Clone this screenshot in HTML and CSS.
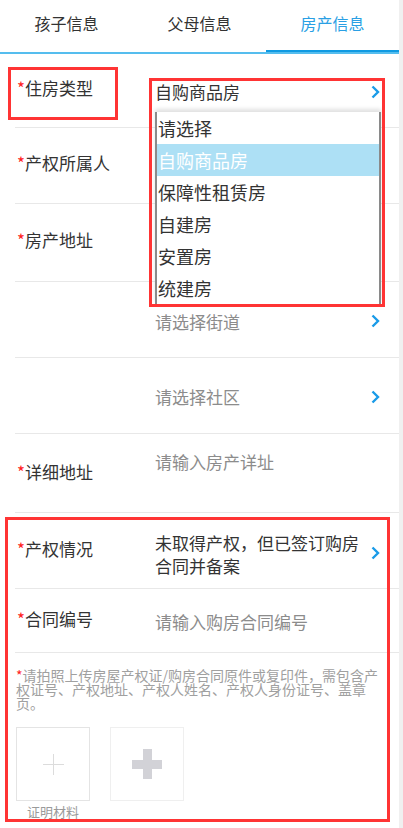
FILE: index.html
```html
<!DOCTYPE html>
<html lang="zh-CN">
<head>
<meta charset="utf-8">
<title>房产信息</title>
<link rel="stylesheet" href="styles.css">
</head>
<body>
<div class="page">
  <div class="tabs">
    <div class="tab">孩子信息</div>
    <div class="tab">父母信息</div>
    <div class="tab active">房产信息</div>
  </div>

  <div class="form">
    <div class="row r1">
      <div class="label"><span class="req">*</span>住房类型</div>
      <div class="value">自购商品房</div>
      <svg class="chev" width="9" height="14" viewBox="0 0 9 14"><polyline points="1.5,1.5 7,7 1.5,12.5" fill="none" stroke="#1a9be8" stroke-width="2.4"/></svg>
    </div>
    <div class="row r2">
      <div class="label"><span class="req">*</span>产权所属人</div>
      <div class="value"></div>
    </div>
    <div class="row r3">
      <div class="label"><span class="req">*</span>房产地址</div>
      <div class="value"></div>
    </div>
    <div class="row r4">
      <div class="label"></div>
      <div class="value ph">请选择街道</div>
      <svg class="chev" width="9" height="14" viewBox="0 0 9 14"><polyline points="1.5,1.5 7,7 1.5,12.5" fill="none" stroke="#1a9be8" stroke-width="2.4"/></svg>
    </div>
    <div class="row r5">
      <div class="label"></div>
      <div class="value ph">请选择社区</div>
      <svg class="chev" width="9" height="14" viewBox="0 0 9 14"><polyline points="1.5,1.5 7,7 1.5,12.5" fill="none" stroke="#1a9be8" stroke-width="2.4"/></svg>
    </div>
    <div class="row r6">
      <div class="label"><span class="req">*</span>详细地址</div>
      <div class="value ph">请输入房产详址</div>
    </div>
    <div class="row r7">
      <div class="label"><span class="req">*</span>产权情况</div>
      <div class="value multi">未取得产权，但已签订购房合同并备案</div>
      <svg class="chev" width="9" height="14" viewBox="0 0 9 14"><polyline points="1.5,1.5 7,7 1.5,12.5" fill="none" stroke="#1a9be8" stroke-width="2.4"/></svg>
    </div>
    <div class="row r8">
      <div class="label"><span class="req">*</span>合同编号</div>
      <div class="value ph">请输入购房合同编号</div>
    </div>

    <p class="note"><span class="req">*</span>请拍照上传房屋产权证/购房合同原件或复印件，需包含产权证号、产权地址、产权人姓名、产权人身份证号、盖章页。</p>

    <div class="uploads">
      <div class="upload">
        <div class="box thin"><span class="plus-thin"></span></div>
        <div class="cap">证明材料</div>
      </div>
      <div class="upload">
        <div class="box add"><span class="plus-bold"></span></div>
      </div>
    </div>
  </div>

  <ul class="dropdown">
    <li>请选择</li>
    <li class="sel">自购商品房</li>
    <li>保障性租赁房</li>
    <li>自建房</li>
    <li>安置房</li>
    <li>统建房</li>
  </ul>

  <div class="mark m1"></div>
  <div class="mark m2"></div>
  <div class="mark m3"></div>
</div>
</body>
</html>
```

FILE: styles.css
```css
* { box-sizing: border-box; }
html, body { margin: 0; padding: 0; }
body {
  background: #f0f0f0;
  font-family: "Noto Sans CJK SC", "Noto Sans", sans-serif;
  color: #333;
}
.page {
  position: relative;
  width: 399px;
  height: 828px;
  background: #fff;
  overflow: hidden;
}

/* tabs */
.tabs {
  display: flex;
  height: 54px;
  border-bottom: 2px solid #55bdee;
}
.tab {
  flex: 1;
  text-align: center;
  font-size: 16px;
  line-height: 24px;
  padding-top: 11px;
  color: #333;
}
.tab.active {
  color: #2a9fe4;
  box-shadow: inset 0 -2px 0 #109ae2;
}

/* form rows */
.form { margin-left: 15px; }
.row {
  display: flex;
  align-items: flex-start;
  border-bottom: 1px solid #e8e8e8;
}
.label {
  width: 140px;
  flex: none;
  padding-left: 2px;
  font-size: 17px;
  line-height: 24px;
  color: #333;
}
.req { color: #f22; }
.value {
  flex: 1;
  font-size: 17px;
  line-height: 24px;
  color: #333;
}
.value.ph { color: #8c8c8c; }
.value.multi { line-height: 23px; padding-right: 4px; }
.chev { flex: none; margin: 32px 19px 0 6px; }

.r1 { height: 74px; }
.r1 .label { margin-top: 22px; }
.r1 .value { margin-top: 26px; }
.r1 .chev { margin-top: 31px; }
.r2 { height: 76px; }
.r2 .label { margin-top: 23px; }
.r3 { height: 78px; }
.r3 .label { margin-top: 24px; }
.r4 { height: 76px; }
.r4 .value { margin-top: 28px; }
.r5 { height: 76px; }
.r5 .value { margin-top: 27px; }
.r6 { height: 79px; }
.r6 .label { margin-top: 26px; }
.r6 .value { margin-top: 16px; }
.r7 { height: 76px; }
.r7 .label { margin-top: 24px; }
.r7 .value { margin-top: 18px; }
.r7 .chev { margin-top: 33px; }
.r8 { height: 64px; }
.r8 .label { margin-top: 18px; }
.r8 .value { margin-top: 21px; }

/* note */
.note {
  margin: 0;
  padding: 15px 0 0 1px;
  width: 370px;
  font-size: 14px;
  line-height: 14px;
  color: #a0a0a0;
}

/* uploads */
.uploads {
  display: flex;
  gap: 20px;
  margin-top: 17px;
  padding-left: 1px;
}
.upload { display: flex; flex-direction: column; align-items: center; }
.box {
  width: 74px;
  height: 74px;
  display: flex;
  align-items: center;
  justify-content: center;
}
.box.thin { border: 1.5px solid #e4e4e4; }
.box.add { border: 1.5px solid #efefef; }
.plus-thin {
  width: 21px;
  height: 21px;
  background:
    linear-gradient(#dcdcdc, #dcdcdc) center / 21px 1px no-repeat,
    linear-gradient(#dcdcdc, #dcdcdc) center / 1px 21px no-repeat;
}
.plus-bold {
  width: 30px;
  height: 30px;
  background:
    linear-gradient(#d2d2d7, #d2d2d7) center / 30px 9px no-repeat,
    linear-gradient(#d2d2d7, #d2d2d7) center / 9px 30px no-repeat;
  border-radius: 2px;
}
.cap {
  margin-top: 3px;
  font-size: 13px;
  line-height: 16px;
  color: #9a9a9a;
}

/* open select list */
.dropdown {
  position: absolute;
  left: 155px;
  top: 112px;
  width: 226px;
  margin: 0;
  padding: 0;
  list-style: none;
  background: #fff;
  border-left: 2px solid #8a8a8a;
  border-right: 2px solid #8a8a8a;
  box-shadow: 0 -3px 4px rgba(0, 0, 0, 0.12);
  z-index: 2;
}
.dropdown li {
  height: 32px;
  line-height: 32px;
  padding-left: 1px;
  font-size: 18px;
  color: #333;
}
.dropdown li.sel {
  background: #ade0f5;
  color: #fff;
}

/* red annotation boxes */
.mark {
  position: absolute;
  border: 3px solid #ff3434;
  z-index: 3;
}
.m1 { left: 8px; top: 67px; width: 110px; height: 53px; }
.m2 { left: 149px; top: 78px; width: 236px; height: 229px; }
.m3 { left: 5px; top: 517px; width: 385px; height: 305px; }
```
